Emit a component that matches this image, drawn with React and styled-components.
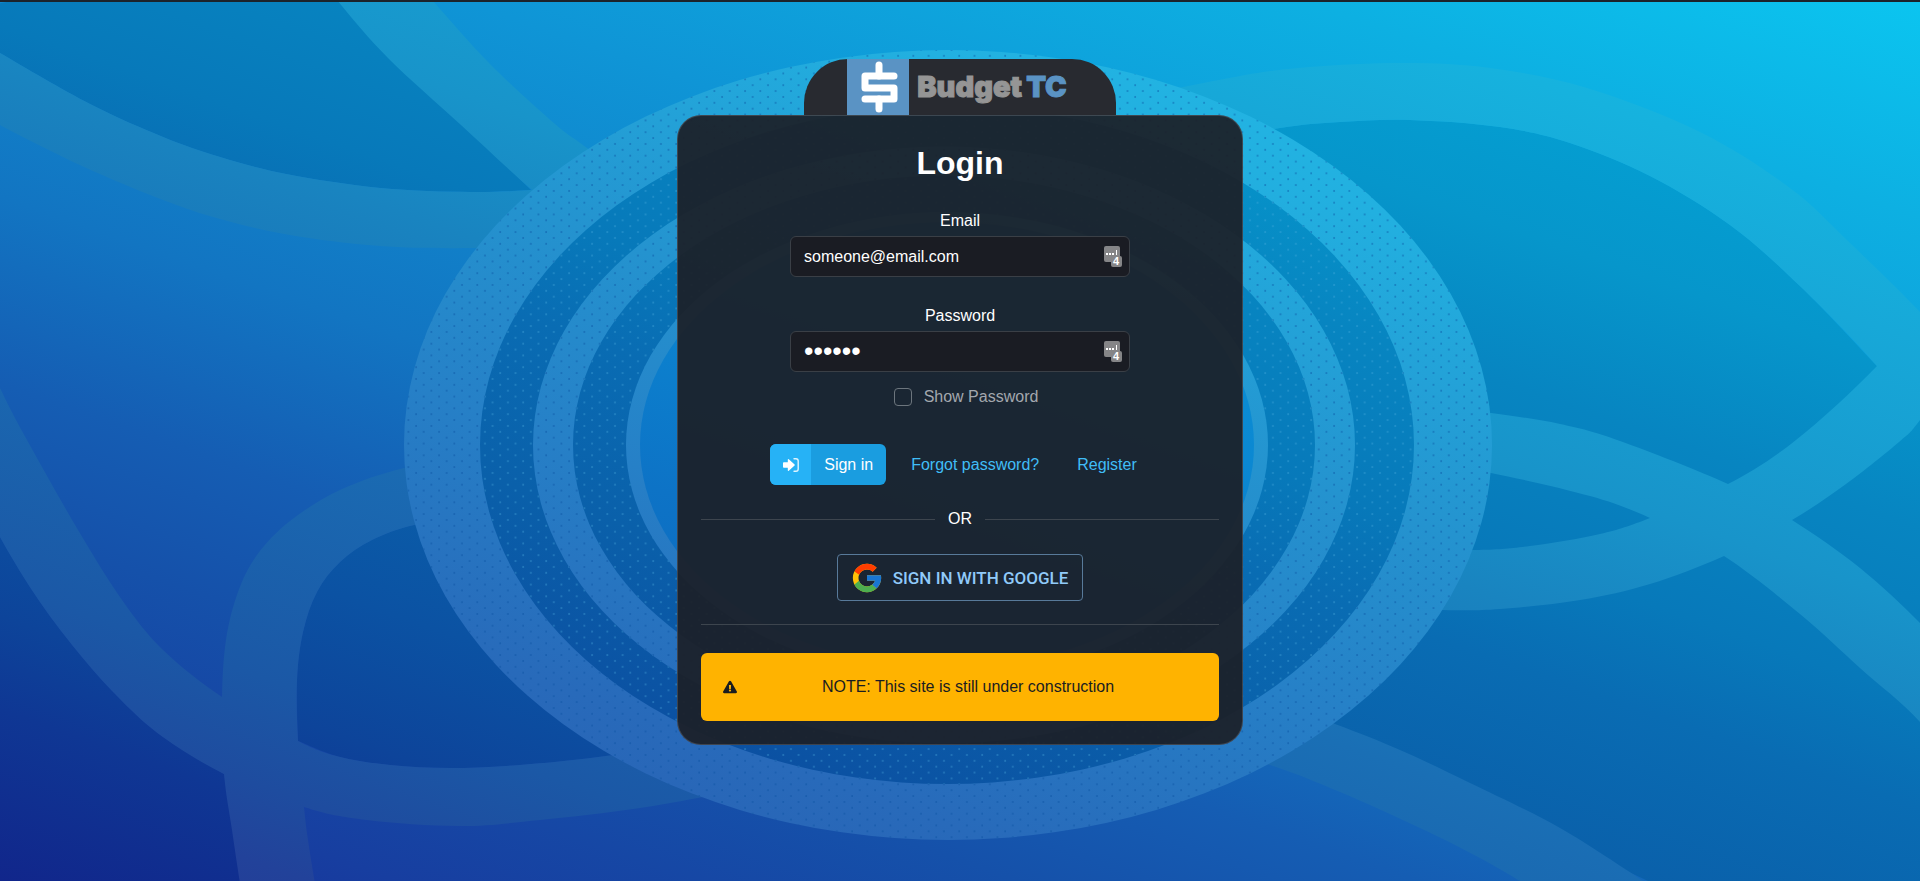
import React, { useState } from "react";
import styled, { createGlobalStyle } from "styled-components";
import { FaExclamationTriangle } from "react-icons/fa";

const GlobalStyle = createGlobalStyle`
  * { box-sizing: border-box; }
  body {
    margin: 0;
    color: #fff;
    background: #1c232b;
    font: 16px/24px "Liberation Sans", Arial, sans-serif;
  }
`;

/* ---------- backdrop ---------- */

// Catmull-Rom through a list of points, as cubic segments
const curve = (pts) =>
  pts
    .slice(0, -1)
    .map((p, i) => {
      const a = pts[i - 1] || p;
      const b = pts[i + 1];
      const c = pts[i + 2] || b;
      return `C${p[0] + (b[0] - a[0]) / 6} ${p[1] + (b[1] - a[1]) / 6} ${b[0] - (c[0] - p[0]) / 6} ${b[1] - (c[1] - p[1]) / 6} ${b[0]} ${b[1]}`;
    })
    .join("");

const strip = (edgeA, edgeB) => {
  const back = [...edgeB].reverse();
  return `M${edgeA[0]}${curve(edgeA)}L${back[0]}${curve(back)}Z`;
};

const area = (edge, corners) => `M${edge[0]}${curve(edge)}${corners.map((c) => `L${c}`).join("")}Z`;

const sweepTop = [[-60, 16], [0, 53], [90, 104], [163, 137], [220, 157], [286, 174], [380, 188], [470, 192], [531, 190], [620, 182]];
const sweepBottom = [[-60, 90], [0, 125], [82, 166], [163, 200], [220, 219], [290, 235], [380, 246], [478, 248], [600, 244]];
const diagLeft = [[290, -60], [337, 0], [388, 58], [461, 125], [531, 189], [600, 245]];
const diagRight = [[380, -60], [432, 0], [490, 64], [555, 124], [587, 148], [660, 205]];
const leftTop = [[-30, 320], [0, 388], [27, 440], [78, 530], [122, 600], [163, 650], [222, 697], [298, 741], [340, 757], [390, 765], [450, 768], [520, 765], [606, 756], [700, 740]];
const leftBottom = [[-30, 475], [0, 537], [40, 602], [82, 657], [122, 701], [163, 737], [224, 774], [304, 807], [367, 820], [460, 826], [540, 820], [640, 808], [740, 790]];
const loopOuter = [[480, 455], [404, 468], [340, 490], [290, 521], [257, 555], [238, 592], [226, 640], [222, 700], [224, 773], [232, 830], [241, 890]];
const loopInner = [[480, 515], [414, 525], [372, 540], [340, 562], [317, 592], [303, 632], [297, 680], [298, 741], [304, 807], [308, 840], [316, 890]];
const archTop = [[1120, 100], [1240, 76], [1310, 67], [1405, 63], [1490, 68], [1587, 88], [1700, 132], [1790, 188], [1850, 243], [1920, 312], [1970, 370]];
const archBottom = [[1200, 145], [1280, 128], [1340, 122], [1410, 120], [1500, 127], [1570, 143], [1650, 176], [1730, 225], [1800, 286], [1877, 366], [1950, 460]];
const returnTop = [[1940, 290], [1877, 366], [1796, 440], [1728, 484], [1650, 518], [1600, 534], [1530, 546], [1475, 550], [1380, 548]];
const returnBottom = [[1970, 350], [1920, 420], [1899, 442], [1846, 484], [1792, 520], [1724, 556], [1650, 584], [1580, 600], [1500, 609], [1443, 610], [1360, 606]];
const crossTop = [[1400, 402], [1491, 413], [1560, 424], [1620, 441], [1728, 484], [1792, 520], [1860, 568], [1920, 623], [1970, 680]];
const crossBottom = [[1400, 458], [1491, 473], [1590, 496], [1650, 518], [1724, 556], [1800, 614], [1860, 668], [1920, 722], [1970, 790]];
const tailTop = [[1240, 690], [1335, 724], [1400, 750], [1470, 783], [1560, 828], [1648, 884]];
const tailBottom = [[1180, 740], [1270, 765], [1340, 792], [1420, 828], [1480, 858], [1525, 884]];

const stops = {
  light: [[0, "#182f98"], [9, "#173ea0"], [23, "#1551aa"], [32, "#155db3"], [44, "#1275c2"], [67, "#0f95d6"], [86, "#0db0e2"], [100, "#0bc5f0"]],
  dark: [[0, "#11268b"], [11, "#0f3794"], [17, "#0d449a"], [26, "#0b52a3"], [37, "#0a60aa"], [48, "#096cb3"], [55, "#0779ba"], [66, "#0785c1"], [76, "#0696cb"], [85, "#049fd2"], [100, "#03b0dc"]],
  band: [[0, "#253894"], [7, "#22429a"], [12, "#1e4c9f"], [19, "#1b58a6"], [39, "#1a6fb5"], [52, "#1984c0"], [61, "#1894ca"], [78, "#17a8d8"], [86, "#16b2de"], [100, "#16c0e8"]],
  ring: [[0, "#2a55ae"], [17, "#2963b5"], [25, "#286aba"], [41, "#2680c7"], [55, "#2493cf"], [74, "#22b0e0"], [90, "#22bce8"]],
  core: [[20, "#0c62b8"], [40, "#0d73c6"], [55, "#0b88d2"], [75, "#0a98d8"]],
};

const Gradient = ({ id }) => (
  <linearGradient id={id} gradientUnits="userSpaceOnUse" x1="0" y1="881" x2="486" y2="-504">
    {stops[id].map(([at, color]) => (
      <stop key={at} offset={`${at}%`} stopColor={color} />
    ))}
  </linearGradient>
);

const Dots = ({ id, color }) => (
  <pattern id={id} width="15.3" height="11.75" patternUnits="userSpaceOnUse">
    <g fill={color}>
      <circle cx="3" cy="3" r="1" />
      <circle cx="10.65" cy="8.87" r="1" />
    </g>
  </pattern>
);

const Oval = ({ cx, r, fill, dots }) => (
  <>
    <ellipse cx={cx} cy="445" rx={r} ry={r * 0.726} fill={`url(#${fill})`} />
    {dots && <ellipse cx={cx} cy="445" rx={r} ry={r * 0.726} fill={`url(#${dots})`} />}
  </>
);

const BackdropSvg = styled.svg`
  grid-area: 1 / 1;
  width: 100%;
  height: 100%;
  contain: size;
`;

const Backdrop = () => (
  <BackdropSvg viewBox="0 2 1920 879" preserveAspectRatio="xMidYMid slice" aria-hidden="true">
    <defs>
      {Object.keys(stops).map((id) => (
        <Gradient key={id} id={id} />
      ))}
      <Dots id="dotsDark" color="rgba(8,80,160,.5)" />
      <Dots id="dotsLight" color="rgba(80,175,225,.4)" />
    </defs>
    <rect width="1920" height="881" fill="url(#light)" />
    <g fill="url(#dark)">
      <path d={area(sweepTop.slice(0, 9), ["337,0", "300,-60"])} />
      <path d={area(leftBottom.slice(0, 7), ["241,881", "0,881"])} />
      <path d={`M${loopInner[0]}${curve(loopInner.slice(0, 8))}${curve(leftTop.slice(7))}Z`} />
      <path d={area(archBottom.slice(0, 10), ["1920,420", "1920,881", "1648,881", "1240,690"])} />
    </g>
    <g fill="url(#band)">
      <path d={strip(sweepTop, sweepBottom)} />
      <path d={strip(diagLeft, diagRight)} />
      <path d={strip(leftTop, leftBottom)} />
      <path d={strip(loopOuter, loopInner)} />
      <path d={strip(archTop, archBottom)} />
      <path d={strip(returnTop, returnBottom)} />
      <path d={strip(crossTop, crossBottom)} />
      <path d={strip(tailTop, tailBottom)} />
    </g>
    <Oval cx={948} r={544} fill="ring" dots="dotsDark" />
    <Oval cx={947} r={467} fill="dark" dots="dotsLight" />
    <Oval cx={944} r={411} fill="ring" dots="dotsDark" />
    <Oval cx={944} r={371} fill="dark" dots="dotsLight" />
    <Oval cx={947} r={321} fill="ring" />
    <Oval cx={947} r={307} fill="core" />
  </BackdropSvg>
);

/* ---------- page ---------- */

const Page = styled.div`
  display: grid;
  grid-template-columns: minmax(0, 1fr);
  min-height: 100vh;
  border-top: 2px solid #1c232b;
`;

const Content = styled.main`
  grid-area: 1 / 1;
  z-index: 1;
  display: flex;
  flex-direction: column;
  align-items: center;
  padding: 57px 16px 32px;
`;

const LogoTab = styled.header`
  display: flex;
  align-items: center;
  justify-content: center;
  gap: 8px;
  width: 312px;
  max-width: 100%;
  height: 56px;
  padding-right: 6px;
  border-radius: 44px 44px 0 0;
  background: #282a30;
`;

const LogoMark = styled.svg`
  flex: none;
  width: 62px;
  height: 56px;
  background: #5a93c4;
`;

const Wordmark = styled.span`
  color: #959595;
  font: 900 29px/32px Inter, sans-serif;
  -webkit-text-stroke: 1px currentColor;
`;

const WordmarkAccent = styled.span`
  margin-left: 4px;
  color: #5a93c4;
`;

const Card = styled.section`
  width: 100%;
  max-width: 566px;
  padding: 28px 23px 23px;
  border: 1px solid rgba(255, 255, 255, 0.15);
  border-radius: 24px;
  background: rgba(28, 31, 39, 0.93);
`;

const Title = styled.h1`
  margin: 0;
  font-size: 32px;
  line-height: 38px;
  text-align: center;
`;

const Form = styled.form`
  display: flex;
  flex-direction: column;
  align-items: center;
`;

const Field = styled.div`
  display: flex;
  flex-direction: column;
  align-items: center;
  gap: 3px;
  width: 340px;
  max-width: 100%;
  margin-top: 27px;
`;

const InputWrap = styled.div`
  position: relative;
  width: 100%;
`;

const Input = styled.input`
  display: block;
  width: 100%;
  height: 41px;
  padding: 0 36px 0 13px;
  border: 1px solid #3a3f46;
  border-radius: 6px;
  background: #1a1c23;
  color: #fff;
  font: inherit;

  &[type="password"] {
    font-size: 27px;
  }
`;

const ManagerBadge = styled.svg`
  position: absolute;
  top: 9px;
  right: 7px;
  width: 20px;
  height: 22px;
`;

const CheckRow = styled.label`
  display: flex;
  align-items: center;
  gap: 12px;
  margin-top: 13px;
  padding-left: 12px;
  color: #a3a8ae;
`;

const Checkbox = styled.input`
  appearance: none;
  width: 18px;
  height: 18px;
  margin: 0;
  border: 1px solid #6c757d;
  border-radius: 4px;
  background: ${(p) => (p.checked ? "#1a9de0" : "transparent")};
`;

const Actions = styled.div`
  display: flex;
  flex-wrap: wrap;
  align-items: center;
  gap: 12px;
  margin-top: 35px;
`;

const SignInButton = styled.button`
  display: flex;
  align-items: center;
  height: 41px;
  padding: 0;
  overflow: hidden;
  border: 0;
  border-radius: 6px;
  background: #1a9de0;
  color: #fff;
  font: inherit;
`;

const ButtonIcon = styled.span`
  display: flex;
  align-items: center;
  justify-content: center;
  width: 41px;
  height: 41px;
  background: #26b2f6;
`;

const ButtonLabel = styled.span`
  padding: 0 13px;
`;

const TextLink = styled.a`
  padding: 8px 13px;
  color: #40bdf7;
  text-decoration: none;
`;

const OrRow = styled.div`
  display: flex;
  align-items: center;
  gap: 13px;
  margin-top: 22px;
`;

const Rule = styled.hr`
  flex: 1;
  height: 1px;
  margin: 0;
  border: 0;
  background: #3d454e;
`;

const GoogleButton = styled.button`
  display: flex;
  align-items: center;
  gap: 9px;
  height: 47px;
  margin: 23px auto;
  padding: 0 14px 0 12px;
  border: 1px solid #587a9a;
  border-radius: 4px;
  background: transparent;
  color: #90caf9;
  font: 500 17px/24px Roboto, sans-serif;
  text-transform: uppercase;
`;

const Alert = styled.div`
  display: flex;
  align-items: center;
  gap: 4px;
  min-height: 68px;
  margin-top: 28px;
  padding: 0 24px 0 22px;
  border-radius: 6px;
  background: #ffb300;
  color: #1a1c20;
`;

const AlertText = styled.span`
  flex: 1;
  text-align: center;
`;

const BadgeCount = styled.text`
  fill: #fff;
  font: 700 11px "Liberation Sans", Arial, sans-serif;
  text-anchor: middle;
`;

const Badge = () => (
  <ManagerBadge viewBox="0 0 20 22" aria-hidden="true">
    <rect x="1" y="1" width="16" height="16" rx="2" fill="#858587" />
    <g fill="#fff">
      <rect x="3" y="8" width="2" height="2" />
      <rect x="6" y="8" width="2" height="2" />
      <rect x="9" y="8" width="2" height="2" />
      <rect x="13" y="5" width="1" height="5" />
    </g>
    <rect x="8" y="11" width="11" height="11" rx="2" fill="#858587" />
    <BadgeCount x="13" y="20">4</BadgeCount>
  </ManagerBadge>
);

const SignInIcon = () => (
  <svg width="16" height="16" viewBox="0 0 16 16" aria-hidden="true">
    <path d="M.8 5.3H4.8V2.6Q5 1.8 5.8 2.3L11.6 7.5Q12 8 11.6 8.5L5.8 13.7Q5 14.2 4.8 13.4V10.7H.8Q0 10.7 0 9.9V6.1Q0 5.3 .8 5.3Z" fill="currentColor" />
    <path d="M11 1.8H13A2.2 2.2 0 0 1 15.2 4V12A2.2 2.2 0 0 1 13 14.2H11" fill="none" stroke="currentColor" strokeWidth="1.4" strokeLinecap="round" opacity=".85" />
  </svg>
);

const GoogleLogo = () => (
  <svg width="34" height="34" viewBox="0 0 48 48" aria-hidden="true">
    <path fill="#FFC107" d="M43.611 20.083H42V20H24v8h11.303c-1.649 4.657-6.08 8-11.303 8-6.627 0-12-5.373-12-12s5.373-12 12-12c3.059 0 5.842 1.154 7.961 3.039l5.657-5.657C34.046 6.053 29.268 4 24 4 12.955 4 4 12.955 4 24s8.955 20 20 20 20-8.955 20-20c0-1.341-.138-2.65-.389-3.917z" />
    <path fill="#FF3D00" d="M6.306 14.691l6.571 4.819C14.655 15.108 18.961 12 24 12c3.059 0 5.842 1.154 7.961 3.039l5.657-5.657C34.046 6.053 29.268 4 24 4 16.318 4 9.656 8.337 6.306 14.691z" />
    <path fill="#4CAF50" d="M24 44c5.166 0 9.86-1.977 13.409-5.192l-6.19-5.238A11.91 11.91 0 0 1 24 36c-5.202 0-9.619-3.317-11.283-7.946l-6.522 5.025C9.505 39.556 16.227 44 24 44z" />
    <path fill="#1976D2" d="M43.611 20.083H42V20H24v8h11.303a12.04 12.04 0 0 1-4.087 5.571l.003-.002 6.19 5.238C36.971 39.205 44 34 44 24c0-1.341-.138-2.65-.389-3.917z" />
  </svg>
);

export default function App() {
  const [email, setEmail] = useState("someone@email.com");
  const [password, setPassword] = useState("secret");
  const [show, setShow] = useState(false);

  return (
    <>
      <GlobalStyle />
      <Page>
        <Backdrop />
        <Content>
          <LogoTab>
            <LogoMark viewBox="0 0 62 56" aria-hidden="true">
              <g fill="none" stroke="#fff" strokeWidth="7" strokeLinecap="round" strokeLinejoin="round">
                <path d="M32 6V17M32 40V50" />
                <path d="M47 17H18V29H47V40H18" />
              </g>
            </LogoMark>
            <Wordmark>
              Budget<WordmarkAccent>TC</WordmarkAccent>
            </Wordmark>
          </LogoTab>
          <Card>
            <Title>Login</Title>
            <Form onSubmit={(e) => e.preventDefault()}>
              <Field>
                <label htmlFor="email">Email</label>
                <InputWrap>
                  <Input id="email" type="email" value={email} onChange={(e) => setEmail(e.target.value)} />
                  <Badge />
                </InputWrap>
              </Field>
              <Field>
                <label htmlFor="password">Password</label>
                <InputWrap>
                  <Input
                    id="password"
                    type={show ? "text" : "password"}
                    value={password}
                    onChange={(e) => setPassword(e.target.value)}
                  />
                  <Badge />
                </InputWrap>
              </Field>
              <CheckRow>
                <Checkbox type="checkbox" checked={show} onChange={(e) => setShow(e.target.checked)} />
                Show Password
              </CheckRow>
              <Actions>
                <SignInButton type="submit">
                  <ButtonIcon>
                    <SignInIcon />
                  </ButtonIcon>
                  <ButtonLabel>Sign in</ButtonLabel>
                </SignInButton>
                <TextLink href="#forgot">Forgot password?</TextLink>
                <TextLink href="#register">Register</TextLink>
              </Actions>
            </Form>
            <OrRow>
              <Rule />
              OR
              <Rule />
            </OrRow>
            <GoogleButton type="button">
              <GoogleLogo />
              Sign in with Google
            </GoogleButton>
            <Rule />
            <Alert role="alert">
              <FaExclamationTriangle size={14} />
              <AlertText>NOTE: This site is still under construction</AlertText>
            </Alert>
          </Card>
        </Content>
      </Page>
    </>
  );
}
